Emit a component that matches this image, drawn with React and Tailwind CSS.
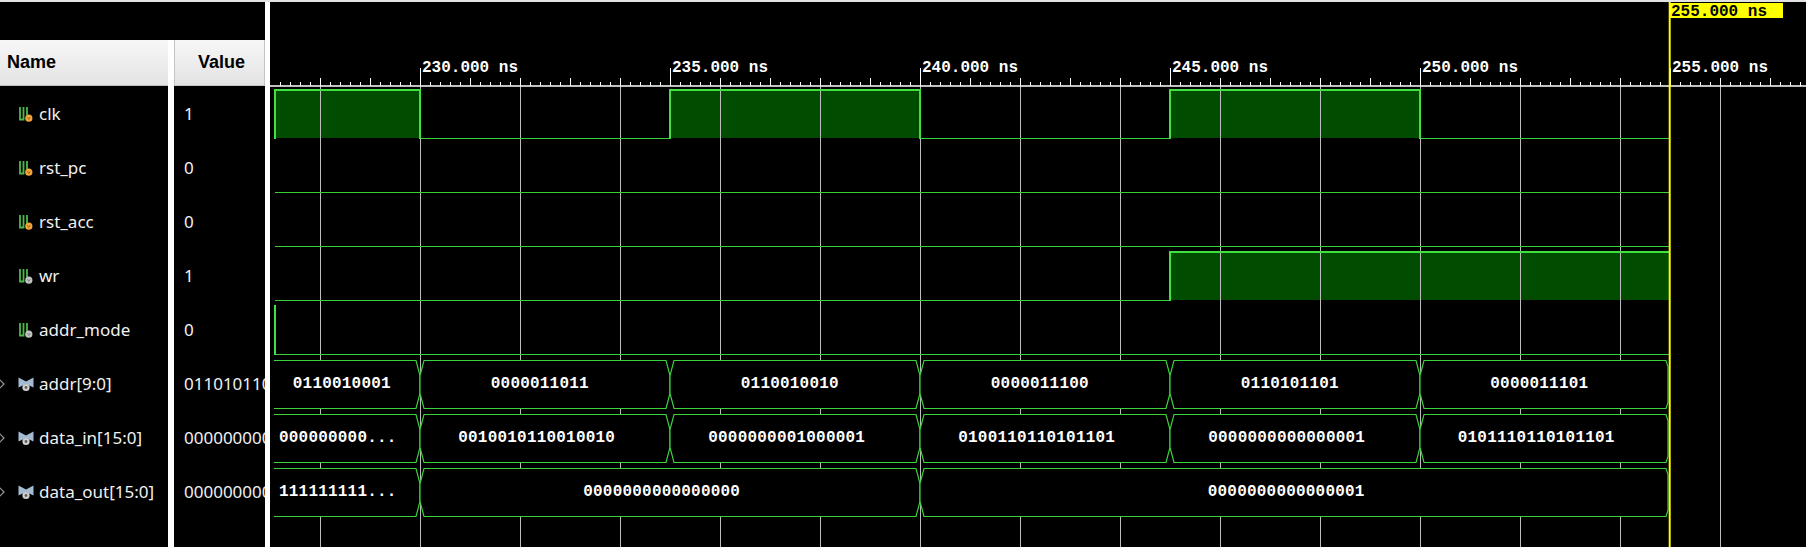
const rows = [
  { name: "clk", value: "1", kind: "in" },
  { name: "rst_pc", value: "0", kind: "in" },
  { name: "rst_acc", value: "0", kind: "in" },
  { name: "wr", value: "1", kind: "out" },
  { name: "addr_mode", value: "0", kind: "out" },
  { name: "addr[9:0]", value: "0110101101", kind: "bus" },
  { name: "data_in[15:0]", value: "0000000000000001", kind: "bus" },
  { name: "data_out[15:0]", value: "0000000000000001", kind: "bus" },
];

const START = 274;
const END = 1669;
const ROW_TOP = 87;
const ROW_H = 54;
const px = (ns) => 420 + (ns - 230) * 50;

// scalar waves: list of [from, to, level]
const scalars = [
  [[START + 1, px(230), 1], [px(230), px(235), 0], [px(235), px(240), 1], [px(240), px(245), 0], [px(245), px(250), 1], [px(250), END, 0]],
  [[START + 1, END, 0]],
  [[START + 1, END, 0]],
  [[START + 1, px(245), 0], [px(245), END, 1]],
  [[START + 1, END, 0]],
];

const buses = [
  [
    [START, px(230), "0110010001"],
    [px(230), px(235), "0000011011"],
    [px(235), px(240), "0110010010"],
    [px(240), px(245), "0000011100"],
    [px(245), px(250), "0110101101"],
    [px(250), END, "0000011101"],
  ],
  [
    [START, px(230), "000000000..."],
    [px(230), px(235), "0010010110010010"],
    [px(235), px(240), "0000000001000001"],
    [px(240), px(245), "0100110110101101"],
    [px(245), px(250), "0000000000000001"],
    [px(250), END, "0101110110101101"],
  ],
  [
    [START, px(230), "111111111..."],
    [px(230), px(240), "0000000000000000"],
    [px(240), END, "0000000000000001"],
  ],
];

function ScalarIcon({ kind }) {
  return (
    <svg width="16" height="16" viewBox="0 0 16 16" className="shrink-0">
      <path d="M2 1 V13.5 H5.5 V1" stroke="#4cb84c" strokeWidth="1.8" fill="none" />
      <path d="M9 1 V9.5" stroke="#4cb84c" strokeWidth="1.8" fill="none" />
      <circle cx="10.8" cy="12.2" r="3.6" fill={kind === "in" ? "#f0a53c" : "#c2c2c2"} />
      <path d="M9.4 11.2 L10.8 13.4 L12.2 11.2" stroke={kind === "in" ? "#a0600c" : "#777"} strokeWidth="0.9" fill="none" />
    </svg>
  );
}

function BusIcon() {
  return (
    <svg width="16" height="16" viewBox="0 0 16 16" className="shrink-0">
      <polygon points="0.5,1.5 8,5.5 15.5,1.5 15.5,11.5 8,8 0.5,11.5" fill="#a3bad3" />
      <circle cx="8" cy="11.5" r="3.6" fill="#d0d0d0" />
      <circle cx="8" cy="11.5" r="1.4" fill="#5e5e5e" />
    </svg>
  );
}

function busPath(a, b, top, bot) {
  const w = 15;
  const first = a === START;
  const last = b === END;
  const lx = first ? a : a + 4;
  let d = `M${lx} ${top}`;
  if (last) {
    d += ` L${b - 3} ${top} L${b - 1} ${top + 6} L${b - 1} ${bot - 6} L${b - 3} ${bot}`;
  } else {
    d += ` L${b - 4} ${top} L${b} ${top + w} L${b} ${bot - w} L${b - 4} ${bot}`;
  }
  d += ` L${lx} ${bot}`;
  if (!first) d += ` L${a} ${bot - w} L${a} ${top + w} Z`;
  return d;
}

function Waveform() {
  const grid = [];
  for (let x = 320; x < 1806; x += 100) grid.push(x);
  const small = [];
  for (let x = 280; x < 1806; x += 10) small.push(x);
  const medium = [];
  for (let x = 320; x < 1806; x += 50) medium.push(x);
  const labels = [230, 235, 240, 245, 250, 255];
  const mono = { fontFamily: "'Liberation Mono', 'DejaVu Sans Mono', monospace" };

  return (
    <svg width="1536" height="545" viewBox="270 2 1536 545" className="block shrink-0">
      <rect x="270" y="2" width="1536" height="545" fill="#000" />

      {/* high fills */}
      {scalars.map((segs, i) =>
        segs
          .filter((s) => s[2] === 1)
          .map(([a, b], j) => {
            const t = ROW_TOP + i * ROW_H;
            return <rect key={`f${i}-${j}`} x={a} y={t + 3} width={b - a} height={48} fill="#004d00" />;
          })
      )}

      {/* grid */}
      {grid.map((x) => (
        <line key={`g${x}`} x1={x + 0.5} y1="86" x2={x + 0.5} y2="547" stroke="#bdbdbd" strokeWidth="1" />
      ))}

      {/* ruler */}
      {small.map((x) => (
        <line key={`s${x}`} x1={x + 0.5} y1="82" x2={x + 0.5} y2="86" stroke="#fff" strokeWidth="1" />
      ))}
      {medium.map((x) => (
        <line key={`m${x}`} x1={x + 0.5} y1="78" x2={x + 0.5} y2="86" stroke="#fff" strokeWidth="1" />
      ))}
      {labels.map((ns) => (
        <g key={`l${ns}`}>
          <line x1={px(ns) + 0.5} y1="68" x2={px(ns) + 0.5} y2="86" stroke="#fff" strokeWidth="1" />
          <text x={px(ns) + 2} y="72" fill="#fff" fontSize="16" fontWeight="bold" style={mono}>
            {ns}.000 ns
          </text>
        </g>
      ))}
      <line x1="270" y1="86" x2="1806" y2="86" stroke="#fff" strokeWidth="1.6" />

      {/* scalar lines */}
      {scalars.map((segs, i) => {
        const t = ROW_TOP + i * ROW_H;
        const hi = t + 3;
        const lo = t + 51;
        const parts = [];
        segs.forEach(([a, b, lv], j) => {
          if (lv === 1) {
            parts.push(<line key={`h${j}`} x1={a} y1={hi} x2={b} y2={hi} stroke="#3fe03f" strokeWidth="2" />);
          } else {
            parts.push(<line key={`o${j}`} x1={a} y1={lo + 0.5} x2={b} y2={lo + 0.5} stroke="#36cf36" strokeWidth="1.2" />);
          }
          const edge = j === 0 ? lv === 1 || i === 4 : segs[j - 1][2] !== lv;
          if (edge) {
            parts.push(<line key={`v${j}`} x1={a} y1={hi - 1} x2={a} y2={lo + 1} stroke="#3fe03f" strokeWidth="2" />);
          }
        });
        return <g key={`w${i}`}>{parts}</g>;
      })}

      {/* buses */}
      {buses.map((segs, i) => {
        const t = ROW_TOP + (i + 5) * ROW_H;
        const top = t + 3.5;
        const bot = t + 51.5;
        const mid = t + 27;
        return (
          <g key={`b${i}`}>
            {segs.map(([a, b, label], j) => {
              const truncated = label.endsWith("...");
              const tx = truncated ? a + 5 : (a + b) / 2 - label.length * 5.42;
              return (
                <g key={j}>
                  <path d={busPath(a, b, top, bot)} fill="#000" stroke="#3cd23c" strokeWidth="1.2" />
                  <text x={tx} y={mid} dominantBaseline="central" fill="#fff" fontSize="16" fontWeight="bold" letterSpacing="0.2" style={mono}>
                    {label}
                  </text>
                </g>
              );
            })}
          </g>
        );
      })}

      {/* cursor */}
      <line x1="1669.7" y1="2" x2="1669.7" y2="547" stroke="#ffff00" strokeWidth="2" />
      <rect x="1669" y="3" width="114" height="15" fill="#ffff00" />
      <text x="1671" y="16" fill="#000" fontSize="16" fontWeight="bold" style={mono}>
        255.000 ns
      </text>
    </svg>
  );
}

function Chevron() {
  return (
    <svg width="6" height="12" viewBox="0 0 6 12" className="absolute left-0 top-1/2 -translate-y-1/2">
      <path d="M-1 1 L4 6 L-1 11" stroke="#9a9a9a" strokeWidth="1.2" fill="none" />
    </svg>
  );
}

export default function App() {
  return (
    <div className="w-[1806px] h-[547px] bg-black overflow-hidden flex flex-col" style={{ fontFamily: "'Noto Sans', 'Open Sans', sans-serif" }}>
      <div className="h-[2px] bg-[#e2e2e2] shrink-0" />
      <div className="flex flex-1">
        <div className="w-[265px] flex flex-col shrink-0">
          <div className="h-[38px] shrink-0" />
          <div className="flex flex-1">
            {/* Name column */}
            <div className="w-[168px] flex flex-col">
              <div className="h-[46px] flex items-center pl-[7px] bg-gradient-to-b from-[#f7f7f7] to-[#e3e3e3] border-b border-[#bdbdbd] text-[18px] font-bold text-black" style={{ fontFamily: "'Liberation Sans', Arial, sans-serif" }}>
                Name
              </div>
              <div className="pt-px">
                {rows.map((r) => (
                  <div key={r.name} className="relative h-[54px] flex items-center gap-[5px] pl-[18px] text-[17px] text-[#f0f0f0]">
                    {r.kind === "bus" && <Chevron />}
                    {r.kind === "bus" ? <BusIcon /> : <ScalarIcon kind={r.kind} />}
                    <span className="whitespace-nowrap">{r.name}</span>
                  </div>
                ))}
              </div>
            </div>
            <div className="w-[6px] bg-white" />
            {/* Value column */}
            <div className="w-[91px] flex flex-col">
              <div className="h-[46px] flex items-center pl-[23px] bg-gradient-to-b from-[#f7f7f7] to-[#e3e3e3] border-b border-l border-r border-[#c4c4c4] text-[18px] font-bold text-black" style={{ fontFamily: "'Liberation Sans', Arial, sans-serif" }}>
                Value
              </div>
              <div className="pt-px">
                {rows.map((r) => (
                  <div key={r.name} className="h-[54px] flex items-center pl-[10px] text-[17px] text-[#f0f0f0] overflow-hidden whitespace-nowrap">
                    {r.value}
                  </div>
                ))}
              </div>
            </div>
          </div>
        </div>
        <div className="w-[5px] bg-white shrink-0" />
        <Waveform />
      </div>
    </div>
  );
}
